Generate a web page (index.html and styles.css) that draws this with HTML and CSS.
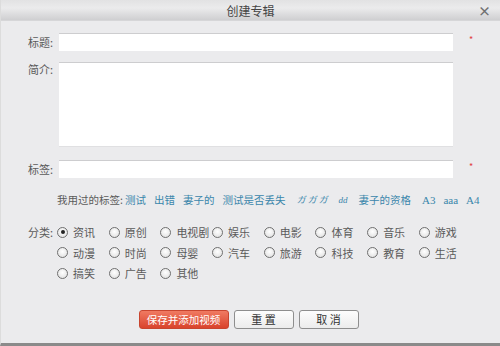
FILE: index.html
```html
<!DOCTYPE html>
<html lang="zh-CN">
<head>
  <meta charset="UTF-8">
  <title>创建专辑</title>
  <link rel="stylesheet" href="styles.css">
</head>
<body>
  <div class="dialog">
    <div class="titlebar">
      <span class="title">创建专辑</span>
      <span class="close">×</span>
    </div>

    <div class="form">
      <!-- 标题 -->
      <div class="row">
        <label class="label">标题:</label>
        <input class="field" type="text">
        <span class="req">*</span>
      </div>

      <!-- 简介 -->
      <div class="row row-top">
        <label class="label label-top">简介:</label>
        <textarea class="field area"></textarea>
      </div>

      <!-- 标签 -->
      <div class="row row-tags">
        <label class="label">标签:</label>
        <input class="field" type="text">
        <span class="req">*</span>
      </div>

      <div class="used-tags">
        <span class="used-label">我用过的标签:</span>
        <a class="tag">测试</a>
        <a class="tag">出错</a>
        <a class="tag">妻子的</a>
        <a class="tag wide">测试是否丢失</a>
        <a class="tag tag-it wide">ガ ガ ガ</a>
        <a class="tag tag-serif tag-it wide">dd</a>
        <a class="tag wide">妻子的资格</a>
        <a class="tag tag-serif">A3</a>
        <a class="tag tag-serif">aaa</a>
        <a class="tag tag-serif">A4</a>
      </div>

      <!-- 分类 -->
      <div class="row row-cat">
        <label class="label">分类:</label>
        <div class="cats">
          <span class="opt"><i class="radio checked"></i>资讯</span>
          <span class="opt"><i class="radio"></i>原创</span>
          <span class="opt"><i class="radio"></i>电视剧</span>
          <span class="opt"><i class="radio"></i>娱乐</span>
          <span class="opt"><i class="radio"></i>电影</span>
          <span class="opt"><i class="radio"></i>体育</span>
          <span class="opt"><i class="radio"></i>音乐</span>
          <span class="opt"><i class="radio"></i>游戏</span>
          <span class="opt"><i class="radio"></i>动漫</span>
          <span class="opt"><i class="radio"></i>时尚</span>
          <span class="opt"><i class="radio"></i>母婴</span>
          <span class="opt"><i class="radio"></i>汽车</span>
          <span class="opt"><i class="radio"></i>旅游</span>
          <span class="opt"><i class="radio"></i>科技</span>
          <span class="opt"><i class="radio"></i>教育</span>
          <span class="opt"><i class="radio"></i>生活</span>
          <span class="opt"><i class="radio"></i>搞笑</span>
          <span class="opt"><i class="radio"></i>广告</span>
          <span class="opt"><i class="radio"></i>其他</span>
        </div>
      </div>

      <div class="actions">
        <button class="btn btn-save">保存并添加视频</button>
        <button class="btn">重 置</button>
        <button class="btn">取 消</button>
      </div>
    </div>
  </div>
</body>
</html>
```

FILE: styles.css
```css
body {
  margin: 0;
  font-family: "Noto Sans CJK SC", "Liberation Sans", sans-serif;
  font-size: 11px;
  color: #555;
}

.dialog {
  width: 500px;
  height: 346px;
  box-sizing: border-box;
  background-color: #ebebed;
  border-left: 1px solid #dcdcdc;
  border-bottom: 3px solid #8a8a8a;
  overflow: hidden;
}

.titlebar {
  height: 20px;
  position: relative;
  background: linear-gradient(#e2e2e3, #ebebec 40%, #cfcfd1);
  border-bottom: 1px solid #d6d6d8;
  text-align: center;
  line-height: 21px;
}

.title {
  font-size: 12px;
  color: #444;
}

.close {
  position: absolute;
  right: 9px;
  top: 0;
  font-size: 13px;
  font-weight: bold;
  color: #707070;
  line-height: 21px;
}

.form {
  padding-top: 12px;
}

.row {
  display: flex;
  align-items: center;
}

.row-top {
  align-items: flex-start;
  margin-top: 11px;
}

.row-tags {
  margin-top: 13px;
}

.label {
  width: 52px;
  text-align: right;
  line-height: 18px;
  color: #5a5a5a;
}

.label-top {
  line-height: 14px;
}

.field {
  width: 394px;
  height: 18px;
  margin: 0 0 0 6px;
  padding: 0;
  box-sizing: border-box;
  background-color: #fff;
  border: none;
  border-top: 1px solid #cdcdcf;
  outline: none;
}

.area {
  height: 85px;
  resize: none;
  display: block;
  border-bottom: 1px solid #e0e0e2;
}

.req {
  margin-left: 16px;
  color: #e04040;
  font-size: 9px;
  line-height: 18px;
  margin-top: -4px;
}

.used-tags {
  display: flex;
  align-items: center;
  margin-top: 14px;
  padding-left: 56px;
  line-height: 16px;
  font-size: 10.5px;
}

.used-label {
  color: #5a5a5a;
  margin-right: 2px;
}

.tag {
  color: #3a86ab;
  margin-right: 8px;
  white-space: nowrap;
}

.tag.wide {
  margin-right: 11px;
}

.tag-serif {
  font-family: "Liberation Serif", serif;
  font-size: 11px;
  margin-right: 8px;
}

.tag-it {
  font-style: italic;
  font-size: 9px;
}

.row-cat {
  align-items: flex-start;
  margin-top: 14px;
}

.row-cat .label {
  line-height: 20px;
}

.cats {
  margin-left: 4px;
  display: grid;
  grid-template-columns: repeat(8, 51.7px);
  grid-auto-rows: 20.5px;
}

.opt {
  display: flex;
  align-items: center;
  white-space: nowrap;
  color: #5a5a5a;
}

.radio {
  width: 11px;
  height: 11px;
  box-sizing: border-box;
  border: 1px solid #707070;
  border-radius: 50%;
  background: radial-gradient(circle at 50% 40%, #ffffff, #dcdcdc);
  margin-right: 5px;
  position: relative;
}

.radio.checked::after {
  content: "";
  position: absolute;
  left: 2.5px;
  top: 2.5px;
  width: 4px;
  height: 4px;
  border-radius: 50%;
  background-color: #222;
}

.actions {
  display: flex;
  justify-content: center;
  gap: 5px;
  margin-top: 26px;
  padding-right: 4px;
}

.btn {
  height: 19px;
  width: 60px;
  padding: 0;
  font-family: "Noto Sans CJK SC", "Liberation Sans", sans-serif;
  font-size: 11px;
  line-height: 17px;
  color: #333;
  background: linear-gradient(#fdfdfd, #ececec);
  border: 1px solid #8e8e8e;
  border-radius: 3px;
}

.btn-save {
  width: 90px;
  font-size: 10.5px;
  color: #fff;
  background: linear-gradient(#f07a62, #d9432c);
  border-color: #c8452f;
}
```
